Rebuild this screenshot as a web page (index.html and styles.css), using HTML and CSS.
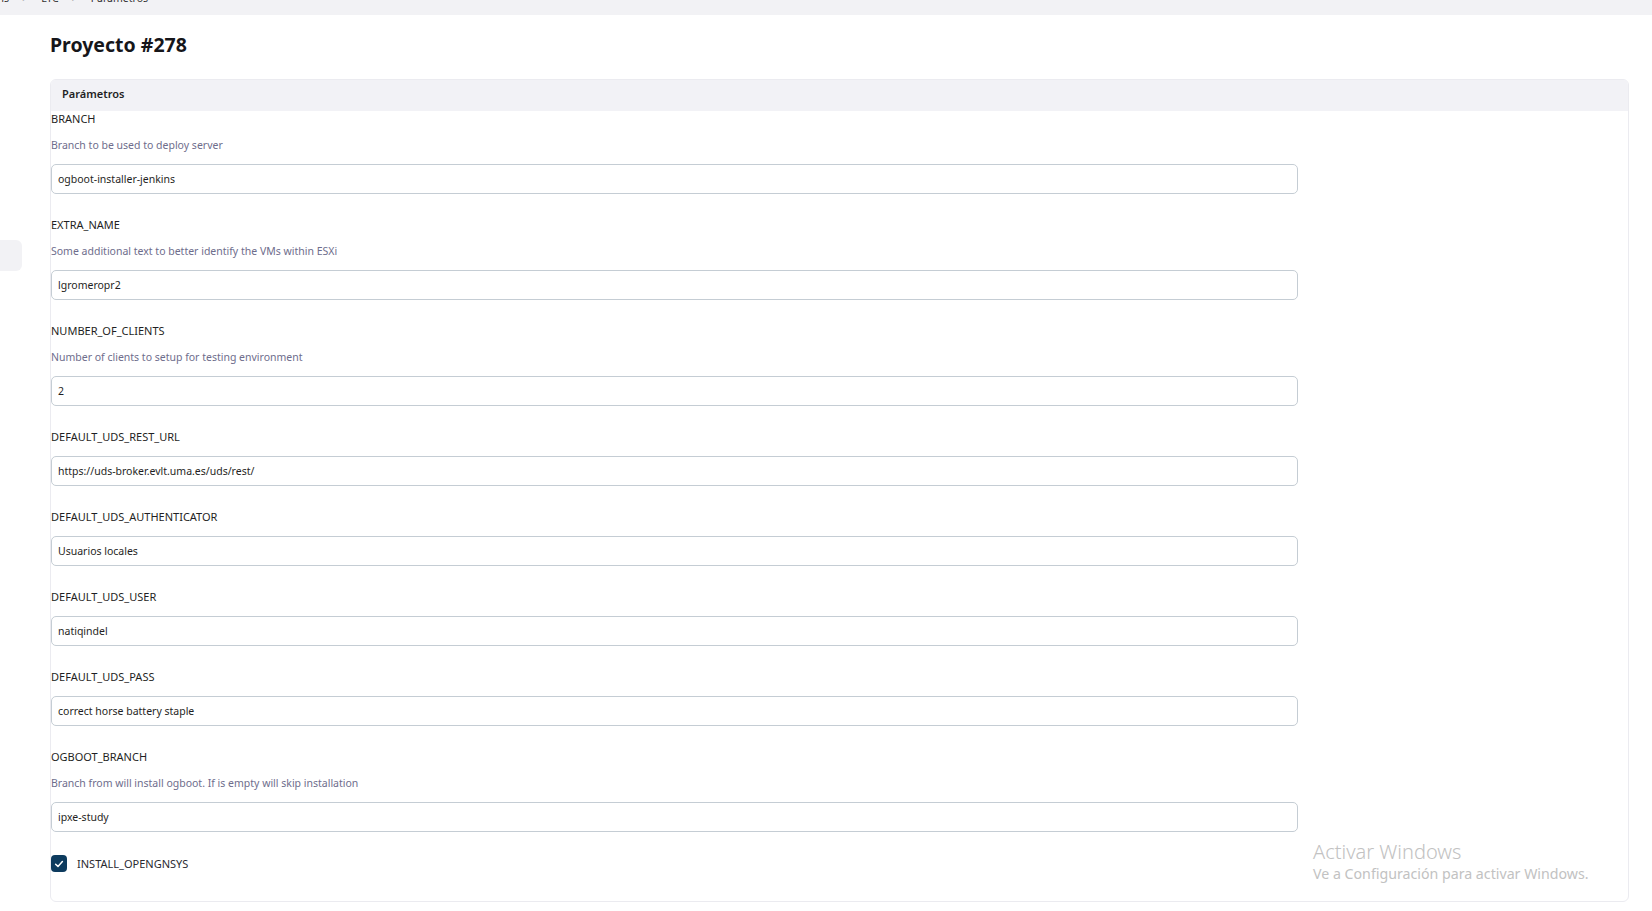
FILE: index.html
```html
<!DOCTYPE html>
<html lang="es">

<head>
  <meta charset="UTF-8" />
  <meta name="viewport" content="width=device-width, initial-scale=1.0" />
  <title>Proyecto #278 - Parámetros</title>
  <link rel="stylesheet" href="styles.css">
</head>

<body>
  <div class="topbar">
    <div class="crumbs">
      <span>Jenkins</span><span class="sep">&gt;</span><span>LTC</span><span class="sep">&gt;</span><span>Parámetros</span>
    </div>
  </div>

  <div class="layout">
    <aside class="sidebar">
      <div class="side-item"></div>
    </aside>

    <main class="content">
      <h1 class="title">Proyecto #278</h1>

      <section class="card">
        <div class="card-header">Parámetros</div>
        <form class="card-body">
          <div class="param">
            <label for="branch">BRANCH</label>
            <p class="desc">Branch to be used to deploy server</p>
            <input type="text" id="branch" value="ogboot-installer-jenkins" />
          </div>

          <div class="param">
            <label for="extra">EXTRA_NAME</label>
            <p class="desc">Some additional text to better identify the VMs within ESXi</p>
            <input type="text" id="extra" value="lgromeropr2" />
          </div>

          <div class="param">
            <label for="clients">NUMBER_OF_CLIENTS</label>
            <p class="desc">Number of clients to setup for testing environment</p>
            <input type="text" id="clients" value="2" />
          </div>

          <div class="param">
            <label for="resturl">DEFAULT_UDS_REST_URL</label>
            <input type="text" id="resturl" value="https://uds-broker.evlt.uma.es/uds/rest/" />
          </div>

          <div class="param">
            <label for="auth">DEFAULT_UDS_AUTHENTICATOR</label>
            <input type="text" id="auth" value="Usuarios locales" />
          </div>

          <div class="param">
            <label for="user">DEFAULT_UDS_USER</label>
            <input type="text" id="user" value="natiqindel" />
          </div>

          <div class="param">
            <label for="pass">DEFAULT_UDS_PASS</label>
            <input type="text" id="pass" value="correct horse battery staple" />
          </div>

          <div class="param">
            <label for="ogboot">OGBOOT_BRANCH</label>
            <p class="desc">Branch from will install ogboot. If is empty will skip installation</p>
            <input type="text" id="ogboot" value="ipxe-study" />
          </div>

          <div class="check-row">
            <span class="check">
              <svg width="10" height="10" viewBox="0 0 10 10">
                <path d="M1.6 5.2 L4 7.4 L8.4 2.6" fill="none" stroke="#fff" stroke-width="1.5" stroke-linecap="round" stroke-linejoin="round" />
              </svg>
            </span>
            <span class="check-label">INSTALL_OPENGNSYS</span>
          </div>
        </form>
      </section>
    </main>
  </div>

  <div class="watermark">
    <div class="wm-title">Activar Windows</div>
    <div class="wm-sub">Ve a Configuración para activar Windows.</div>
  </div>
</body>

</html>
```

FILE: styles.css
```css
body {
  margin: 0;
  background: #fff;
  color: #1f1f24;
  font-family: "Noto Sans", "Open Sans", Arial, sans-serif;
}

/* breadcrumb bar, scrolled so only its lower edge shows */
.topbar {
  height: 15px;
  background-color: #f2f2f5;
  overflow: hidden;
}

.crumbs {
  margin-top: -9px;
  margin-left: -26px;
  font-size: 10.5px;
  line-height: 14px;
  color: #333;
  white-space: nowrap;
}

.crumbs .sep {
  margin: 0 13px;
  color: #777;
}

.layout {
  display: flex;
}

.sidebar {
  width: 50px;
  flex-shrink: 0;
}

.side-item {
  width: 22px;
  height: 31px;
  margin-top: 225px;
  background-color: #f2f2f5;
  border-radius: 0 6px 6px 0;
}

.content {
  flex: 1;
  padding-right: 23px;
  min-width: 0;
}

.title {
  margin: 0;
  padding-top: 16px;
  font-size: 19.5px;
  line-height: 28px;
  font-weight: 700;
  color: #16161a;
}

.card {
  margin-top: 20px;
  border: 1px solid #ebebf0;
  border-radius: 6px;
  overflow: hidden;
}

.card-header {
  height: 31px;
  line-height: 28px;
  padding-left: 11px;
  background-color: #f2f2f6;
  font-size: 11px;
  font-weight: 600;
  color: #1f1f24;
}

.card-body {
  padding-bottom: 29px;
}

.param {
  margin-bottom: 23px;
}

.param label {
  display: block;
  font-size: 11px;
  line-height: 16px;
  color: #1f1f24;
  margin-bottom: 11px;
}

.desc {
  margin: -1px 0 11px;
  font-size: 10.5px;
  line-height: 16px;
  color: #6e6d8c;
}

.param input {
  display: block;
  box-sizing: border-box;
  width: 100%;
  max-width: 1247px;
  height: 30px;
  padding: 0 6px;
  border: 1px solid #c5cdd4;
  border-radius: 5px;
  font-family: inherit;
  font-size: 10.5px;
  color: #1f1f24;
  background: #fff;
}

.check-row {
  display: flex;
  align-items: center;
  gap: 10px;
  height: 17px;
  margin-top: 4px;
}

.check {
  width: 16px;
  height: 17px;
  border-radius: 4px;
  background-color: #0d3b5e;
  display: flex;
  align-items: center;
  justify-content: center;
}

.check-label {
  font-size: 11px;
  color: #2a2a30;
}

/* system watermark drawn over the page */
.watermark {
  position: absolute;
  left: 1313px;
  top: 839px;
  color: #c2c2c2;
}

.wm-title {
  font-size: 20px;
  line-height: 26px;
  font-weight: 300;
}

.wm-sub {
  font-size: 14.2px;
  line-height: 18px;
}
```
